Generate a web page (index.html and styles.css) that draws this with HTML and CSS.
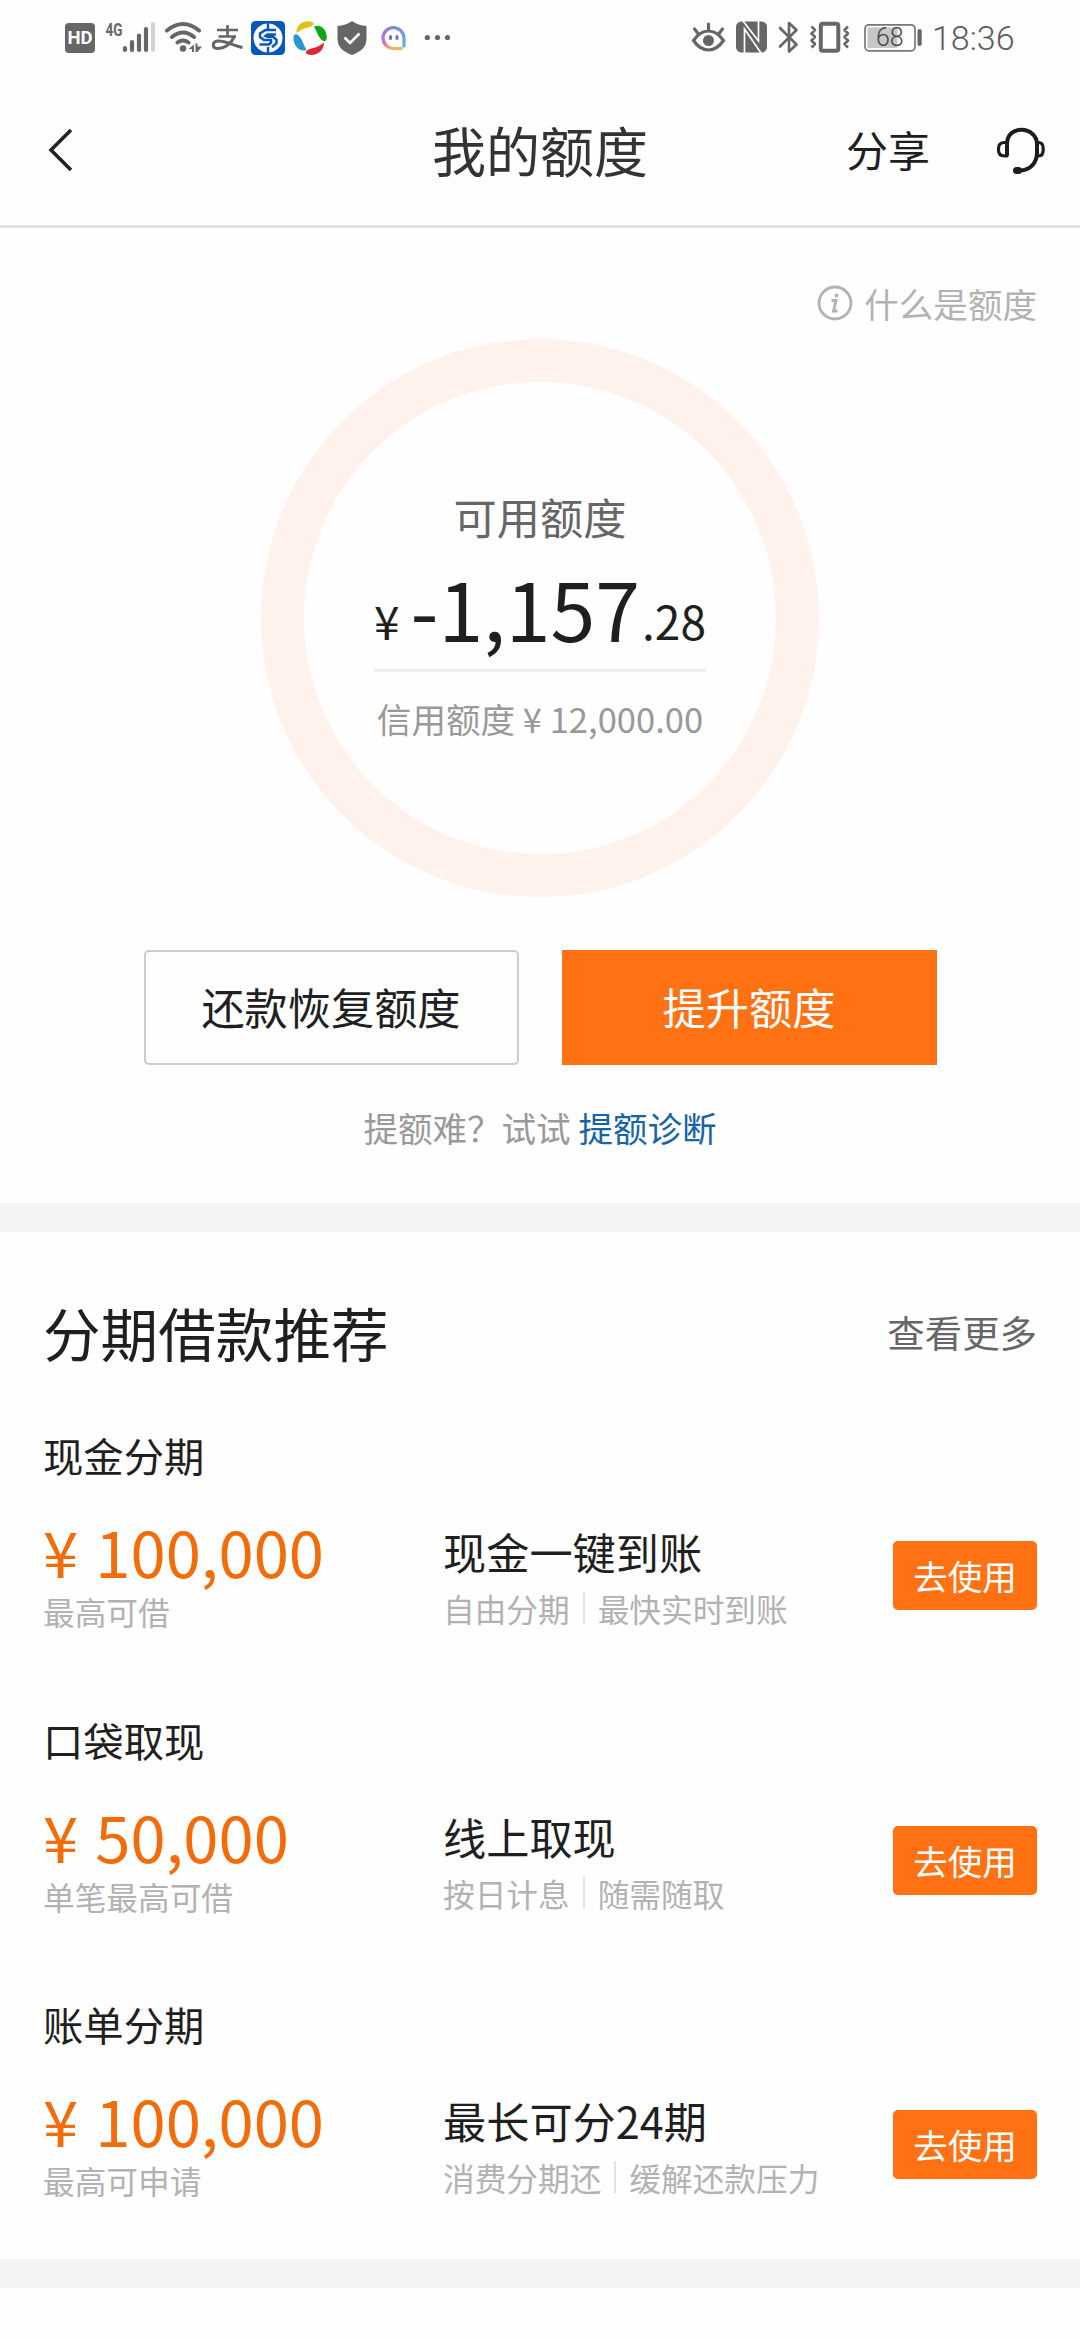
FILE: index.html
```html
<!DOCTYPE html>
<html lang="zh-CN">
<head>
<meta charset="utf-8">
<title>我的额度</title>
<link rel="stylesheet" href="styles.css">
</head>
<body>
<div class="status">
  <div class="status-group">
    <span class="hd">HD</span>
    <svg class="signal" width="60" height="40" viewBox="100 18 60 40">
      <text class="net" x="105.5" y="35.5" textLength="17" lengthAdjust="spacingAndGlyphs">4G</text>
      <g stroke-width="4.2" stroke-linecap="round" stroke="#666">
        <path d="M125 48v2M132 42v8M139 35.500v14.500M146 29v21"/><path stroke="#d2d2d2" d="M153 24v26"/>
      </g>
    </svg>
    <svg width="46" height="40" viewBox="160 18 46 40">
      <g fill="none" stroke="#666" stroke-width="4" stroke-linecap="round">
        <path d="M167 30.500Q183 17.500 199 30.500M172 37Q183 28 194 37M177.500 42.500Q183 38.500 188.500 42.500"/>
      </g>
      <circle cx="183" cy="48.500" r="3.200" fill="#666"/>
      <path fill="#666" d="M188.500 49l5.500-4.500v7.500h-2v-3zM195.500 43.500h2v3h4.500l-4.500 5.500h-2z"/>
    </svg>
    <svg width="42" height="40" viewBox="206 18 42 40">
      <g fill="none" stroke="#666">
        <path stroke-width="2.600" d="M217 30h21M227.500 25v11M218.500 36.500h17.500"/>
        <path stroke-width="3" d="M234.500 36.500C231 44 224 49 217.500 48.500 211.500 48 212 41.500 218 41 225 40.500 233 45.500 242.500 47.500"/>
      </g>
    </svg>
    <svg width="41" height="40" viewBox="248 18 41 40">
      <rect x="251" y="21" width="34" height="34" rx="4.500" fill="#0757bf"/>
      <circle cx="268" cy="38" r="14.500" fill="#fff"/>
      <g fill="none" stroke="#0757bf" stroke-width="2.500">
        <path d="M268 22v7.500M268 47v8"/>
        <path d="M276 30h-10.500l-5.500 3.500v3.500l4 3h7v2.500l-2 2h-9.500M276 34.500h-8.500l-2 1.500 2 .8h5.500l3.500 3v3.500l-4.500 4"/>
      </g>
    </svg>
    <svg width="43" height="40" viewBox="289 18 43 40">
      <path fill="#dfc414" d="M296.500 33C296 24.500 304 19.500 312 22c3 1.500 1.500 3.500-1 4.500-6 2-8 2-14.500 6.500z"/>
      <path fill="#12a51b" d="M314 26.500c6-3 13 2 12.800 11.500-.5 3.500-3 4-5 2-4-4-4-6.500-7.800-13.500z"/>
      <path fill="#dc2a31" d="M324 42.500c0 9-8 14-16 12-3.500-1.500-2-4 .5-5 6-2.500 9-1.500 15.500-7z"/>
      <path fill="#2699c8" d="M306.500 50c-7 2.500-13.500-4.500-13-13 .5-3.500 3-3.500 5-1.500 4 4 4 7 8 14.500z"/>
    </svg>
    <svg width="42" height="40" viewBox="332 18 42 40">
      <path fill="#666" d="M352 21c4 3 9 4.500 14.500 5v13c0 8-6 13-14.500 16-8.500-3-14.500-8-14.500-16V26c5.500-.5 10.500-2 14.500-5z"/>
      <path fill="none" stroke="#fff" stroke-width="2.600" d="M344.500 37.500l5.500 5.500 9.500-9.500"/>
    </svg>
    <svg width="42" height="40" viewBox="374 18 42 40">
      <defs><linearGradient id="chat" x1="0" y1="0" x2=".3" y2="1"><stop offset="0" stop-color="#7a86dc"/><stop offset=".45" stop-color="#a579e2"/><stop offset=".75" stop-color="#e76ac0"/><stop offset="1" stop-color="#efb45c"/></linearGradient>
      <linearGradient id="side" x1="0" y1="0" x2="0" y2="1"><stop offset="0" stop-color="#7a86dc"/><stop offset="1" stop-color="#55b8ee"/></linearGradient></defs>
      <path fill="none" stroke="url(#chat)" stroke-width="3.200" d="M393.500 27.500a10.500 10.500 0 0 0 0 21h9"/>
      <path fill="none" stroke="url(#side)" stroke-width="3.200" d="M393 27.500a11 11 0 0 1 11 11v9"/>
      <path stroke="#8168cd" stroke-width="3" stroke-linecap="round" d="M390.500 36.500v2M397 36.500v2"/>
    </svg>
    <svg width="40" height="40" viewBox="416 18 40 40" fill="#666"><circle cx="427.300" cy="37.500" r="2.600"/><circle cx="437.500" cy="37.500" r="2.600"/><circle cx="447.500" cy="37.500" r="2.600"/></svg>
  </div>
  <div class="status-group">
    <svg width="42" height="40" viewBox="689 18 42 40">
      <g fill="none" stroke="#666" stroke-width="3.200" stroke-linecap="round">
        <path d="M693.500 40.500Q700 31 708.500 31T723.500 40.500Q717 50 708.500 50T693.500 40.500zM708.500 24v6M694.500 29l3.500 4.500M722.500 29l-3.500 4.500"/>
      </g>
      <circle cx="708.500" cy="40.500" r="5.500" fill="#666"/>
    </svg>
    <svg width="43" height="40" viewBox="731 18 43 40">
      <rect x="736" y="21.500" width="31" height="31" rx="5.500" fill="#666"/>
      <path fill="none" stroke="#fff" stroke-width="1.700" d="M744.500 53V29L761 53M743 21L758.500 41V21"/>
    </svg>
    <svg width="32" height="40" viewBox="774 18 32 40">
      <path fill="none" stroke="#666" stroke-width="2.600" stroke-linejoin="round" stroke-linecap="round" d="M780 28l16.500 16.500-7.500 7V23l7.500 7L780 46.500"/>
    </svg>
    <svg width="50" height="40" viewBox="806 18 50 40" fill="none" stroke="#666">
      <rect x="820.800" y="23.800" width="17.500" height="27" rx="2" stroke-width="4"/>
      <path stroke-width="2.600" stroke-linejoin="round" d="M811.500 26.500l3.500 3.500-3.500 3.500 3.500 3.500-3.500 3.500 3.500 3.500-3.500 3.500M848 26.500l-3.500 3.500 3.500 3.500-3.500 3.500 3.500 3.500-3.500 3.500 3.500 3.500"/>
    </svg>
    <svg width="72" height="40" viewBox="856 18 72 40">
      <rect x="865" y="24.800" width="50" height="26" rx="4" fill="none" stroke="#777" stroke-width="1.700"/>
      <rect x="867.500" y="27.500" width="30" height="20.500" fill="#c6c6c6"/>
      <rect x="917.500" y="29" width="4.200" height="17" rx="2" fill="#666"/>
      <text class="battery" x="876" y="46">68</text>
    </svg>
    <span class="clock">18:36</span>
  </div>
</div>

<header class="nav">
  <svg class="back" width="30" height="48" viewBox="0 0 30 48"><path d="M26 4L6 24l20 20" fill="none" stroke="#222" stroke-width="3.600"/></svg>
  <h1>我的额度</h1>
  <div class="nav-actions">
    <span class="share">分享</span>
    <svg width="50" height="50" viewBox="995 125 50 50" fill="none" stroke="#1c1c1c">
      <path stroke-width="4" d="M1007 154.500V143C1007 134 1013 128.800 1021.500 128.800S1037 135 1037 143V151.500C1037 162 1030 169.500 1020 169.500"/>
      <path stroke-width="3.200" stroke-linejoin="round" d="M1007 141.500h-2.500q-6 0-6 6v1.500q0 6 6 6h2.500zM1037 141.500h1.500q4.700 0 4.700 6v1.500q0 6-4.700 6h-1.500z"/>
      <path stroke-width="7" stroke-linecap="round" d="M1016.500 169.500h2"/>
    </svg>
  </div>
</header>

<main>
  <section class="quota">
    <div class="what">
      <svg width="36" height="36" viewBox="0 0 36 36" fill="none" stroke="#b2b2b2"><circle cx="18" cy="18" r="16" stroke-width="2.800"/><path stroke-width="2.800" d="M14.500 15.500h4.500l-2.500 10.500h4"/><circle cx="19.500" cy="10.500" r="1.900" fill="#b2b2b2" stroke="none"/></svg>
      <span>什么是额度</span>
    </div>
    <div class="ring">
      <div class="ring-label">可用额度</div>
      <div class="amount"><span class="small yen">¥</span><span class="big">-1,157</span><span class="small cents">.28</span></div>
      <div class="credit">信用额度 ¥ 12,000.00</div>
    </div>
    <div class="actions">
      <div class="btn btn-outline">还款恢复额度</div>
      <div class="btn btn-primary">提升额度</div>
    </div>
    <p class="hint">提额难？试试 <span class="link">提额诊断</span></p>
  </section>

  <section class="loans">
    <div class="loans-head"><h2>分期借款推荐</h2><span class="more">查看更多</span></div>
    <article class="loan">
      <h3>现金分期</h3>
      <div class="loan-row">
        <div class="loan-sum"><div class="sum">¥ 100,000</div><div class="note">最高可借</div></div>
        <div class="loan-info"><div class="name">现金一键到账</div><div class="tags"><span>自由分期</span><span>最快实时到账</span></div></div>
        <div class="use">去使用</div>
      </div>
    </article>
    <article class="loan">
      <h3>口袋取现</h3>
      <div class="loan-row">
        <div class="loan-sum"><div class="sum">¥ 50,000</div><div class="note">单笔最高可借</div></div>
        <div class="loan-info"><div class="name">线上取现</div><div class="tags"><span>按日计息</span><span>随需随取</span></div></div>
        <div class="use">去使用</div>
      </div>
    </article>
    <article class="loan">
      <h3>账单分期</h3>
      <div class="loan-row">
        <div class="loan-sum"><div class="sum">¥ 100,000</div><div class="note">最高可申请</div></div>
        <div class="loan-info"><div class="name">最长可分24期</div><div class="tags"><span>消费分期还</span><span>缓解还款压力</span></div></div>
        <div class="use">去使用</div>
      </div>
    </article>
  </section>
</main>
</body>
</html>
```
FILE: styles.css
```css
* { box-sizing: border-box; }

body {
  margin: 0;
  width: 1080px;
  height: 2340px;
  overflow: hidden;
  background: #fefefe;
  color: #1f1f1f;
  font-family: "Noto Sans CJK SC", sans-serif;
}

h1, h2, h3, p { margin: 0; font-weight: 400; }
svg { display: block; flex: none; }

/* Status bar */
.status {
  display: flex;
  justify-content: space-between;
  height: 76px;
  padding: 18px 64px 0 65px;
}
.status-group { display: flex; align-items: flex-start; }
.hd {
  width: 30px;
  height: 30px;
  margin: 5px 5px 0 0;
  border-radius: 4px;
  background: #666;
  color: #fff;
  font: 700 18.5px/31px Roboto, sans-serif;
  text-align: center;
}
.net { font: 700 18px Roboto, sans-serif; fill: #666; }
.battery { font: 300 25px Roboto, sans-serif; fill: #444; }
.clock {
  width: 88px;
  padding-left: 4px;
  color: #5c5c5c;
  font: 300 34px/40px Roboto, sans-serif;
}

/* Navigation */
.nav {
  display: grid;
  grid-template-columns: 1fr auto 1fr;
  align-items: center;
  height: 152px;
  padding: 0 35px 0 45px;
  border-bottom: 3px solid #e4e4e4;
}
.back { margin-top: -1px; }
.nav h1 { margin: -2px 0 0 -10px; color: #333; font-size: 54px; line-height: 80px; }
.nav-actions { display: flex; align-items: center; justify-content: flex-end; gap: 65px; }
.share { margin-top: -4px; font-size: 42px; line-height: 60px; }

/* Quota overview */
.quota {
  height: 1004px;
  padding: 49px 43px 0;
  border-bottom: 29px solid #f4f4f4;
}
.what {
  display: flex;
  justify-content: flex-end;
  align-items: center;
  gap: 11px;
  height: 52px;
  color: #b2b2b2;
  font-size: 34.56px;
  line-height: 52px;
}
.ring {
  width: 558px;
  height: 558px;
  margin: 10px auto 0;
  padding-top: 104px;
  border: 43px solid #fff1eb;
  border-radius: 50%;
  display: flex;
  flex-direction: column;
  align-items: center;
}
.ring-label { color: #666; font-size: 43.2px; line-height: 60px; }
.amount {
  width: 332px;
  height: 126px;
  padding-top: 1px;
  border-bottom: 3px solid #eee;
  font-size: 80.64px;
  line-height: 120px;
  text-align: center;
  white-space: nowrap;
}
.small { font-size: 46.08px; line-height: 1; vertical-align: 2px; }
.yen { margin-right: 11px; }
.cents { margin-left: 2px; }
.credit { margin-top: 20px; color: #999; font-size: 34.56px; line-height: 52px; white-space: nowrap; }
.actions { display: flex; justify-content: center; gap: 43px; margin-top: 53px; }
.btn { width: 375px; height: 115px; font-size: 43.2px; line-height: 109px; text-align: center; }
.btn-outline { border: 2px solid #ccc; border-radius: 5px; }
.btn-primary { background: #ff7113; color: #fff; line-height: 113px; }
.hint { margin-top: 36px; color: #999; font-size: 34.56px; line-height: 52px; text-align: center; }
.link { color: #1763a8; }

/* Loan list */
.loans {
  height: 1056px;
  padding: 60px 43px 0;
  border-bottom: 29px solid #f4f4f4;
}
.loans-head { display: flex; justify-content: space-between; align-items: center; height: 80px; }
.loans-head h2 { font-size: 57.6px; line-height: 80px; }
.more { color: #666; font-size: 37.44px; line-height: 56px; }
.loan { height: 284.7px; padding-top: 53px; }
.loan h3 { font-size: 40.32px; line-height: 60px; }
.loan-row { display: grid; grid-template-columns: 400px 1fr 144px; margin-top: 24px; }
.sum { color: #f36c0a; font-size: 63.36px; line-height: 84px; word-spacing: 3px; }
.note { color: #b2b2b2; font-size: 31.68px; line-height: 36px; }
.name { margin-top: 12px; font-size: 43.2px; line-height: 60px; }
.tags { display: flex; align-items: center; margin-top: 11px; color: #b2b2b2; font-size: 31.68px; line-height: 32px; white-space: nowrap; }
.tags span + span { margin-left: 13px; padding-left: 13px; border-left: 2px solid #e2e2e2; }
.use {
  height: 69px;
  margin-top: 32px;
  border-radius: 5px;
  background: #ff7113;
  color: #fff;
  font-size: 34.56px;
  line-height: 69px;
  text-align: center;
}
```
